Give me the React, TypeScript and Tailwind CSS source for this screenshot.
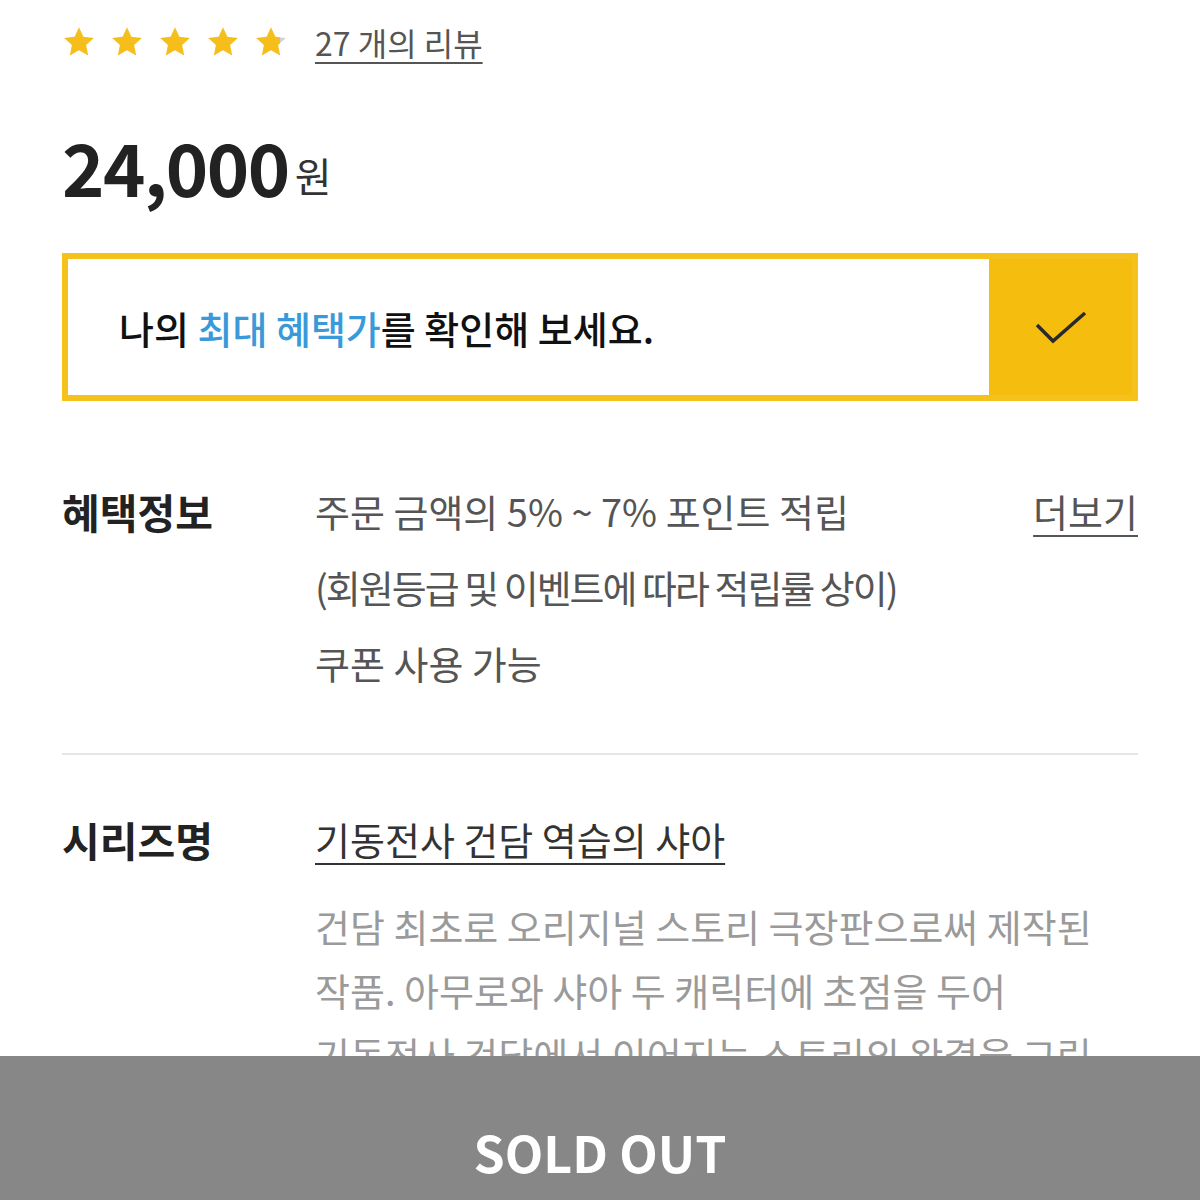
import React from "react";

const FONT = { fontFamily: '"Noto Sans CJK KR", "Noto Sans", sans-serif' };

function Star({ fill = 1, id }: { fill?: number; id: string }) {
  return (
    <svg width="34" height="34" viewBox="0 0 24 24">
      <defs>
        <linearGradient id={id} x1="0" x2="1" y1="0" y2="0">
          <stop offset={fill} stopColor="#F5BE1B" />
          <stop offset={fill} stopColor="#D3D3D3" />
        </linearGradient>
      </defs>
      <polygon
        points="12,1.5 15.1,8.3 22.5,9.1 17,14.1 18.5,21.5 12,17.8 5.5,21.5 7,14.1 1.5,9.1 8.9,8.3"
        fill={`url(#${id})`}
      />
    </svg>
  );
}

export default function App() {
  return (
    <div className="relative w-[1200px] h-[1200px] overflow-hidden bg-white" style={FONT}>
      <div className="px-[62px]">
        {/* Stars */}
        <div className="flex items-center h-[40px] mt-[22px]">
          <div className="flex items-center gap-[14px]">
            <Star id="s1" />
            <Star id="s2" />
            <Star id="s3" />
            <Star id="s4" />
            <Star id="s5" fill={0.8} />
          </div>
          <span className="ml-[27px] text-[32px] text-[#555] underline underline-offset-[6px] decoration-2">
            27 개의 리뷰
          </span>
        </div>

        {/* Price */}
        <div className="flex items-baseline mt-[68px] h-[90px]">
          <span className="text-[72px] font-bold text-[#222] tracking-[-1.5px] leading-none">24,000</span>
          <span className="ml-[6px] text-[40px] text-[#333] leading-none -translate-y-[5px]">원</span>
        </div>

        {/* Benefit box */}
        <div className="mt-[33px] flex h-[148px] border-[6px] border-[#F5C21B]">
          <div className="flex-1 flex items-center pl-[51px] bg-white">
            <span className="text-[38px] font-medium text-[#111]">
              나의 <span className="text-[#3A9AD9]">최대 혜택가</span>를 확인해 보세요.
            </span>
          </div>
          <div className="w-[143px] bg-[#F5BE0F] flex items-center justify-center">
            <svg width="56" height="44" viewBox="0 0 56 44">
              <polyline points="4,20 20,36 52,8" fill="none" stroke="#2a2a2a" strokeWidth="3.5" />
            </svg>
          </div>
        </div>

        {/* 혜택정보 */}
        <div className="flex mt-[86px]">
          <div className="w-[253px] text-[41px] font-bold text-[#222] leading-[48px]">혜택정보</div>
          <div className="flex-1 text-[38px] text-[#555]">
            <div className="leading-[48px]">주문 금액의 5% ~ 7% 포인트 적립</div>
            <div className="leading-[48px] mt-[28px] tracking-[-2px]">(회원등급 및 이벤트에 따라 적립률 상이)</div>
            <div className="leading-[48px] mt-[28px]">쿠폰 사용 가능</div>
          </div>
          <div className="text-[38px] text-[#555] leading-[48px] underline underline-offset-[8px] decoration-2">더보기</div>
        </div>

        <div className="mt-[66px] h-[2px] bg-[#E6E6E6]" />

        {/* 시리즈명 */}
        <div className="flex mt-[60px]">
          <div className="w-[253px] text-[41px] font-bold text-[#222] leading-[48px]">시리즈명</div>
          <div className="flex-1">
            <div className="text-[38px] text-[#333] leading-[48px] underline underline-offset-[8px] decoration-2">
              기동전사 건담 역습의 샤아
            </div>
            <div className="mt-[31px] text-[38px] text-[#9A9A9A] leading-[64px]">
              <div>건담 최초로 오리지널 스토리 극장판으로써 제작된</div>
              <div>작품. 아무로와 샤아 두 캐릭터에 초점을 두어</div>
              <div>기동전사 건담에서 이어지는 스토리의 완결을 그린</div>
            </div>
          </div>
        </div>
      </div>

      {/* Sold out bar */}
      <div className="absolute left-0 right-0 bottom-0 h-[144px] bg-[#878787] flex items-center justify-center pt-[46px]">
        <span className="text-[50px] font-bold text-white leading-none">
          SOLD OUT
        </span>
      </div>
    </div>
  );
}
